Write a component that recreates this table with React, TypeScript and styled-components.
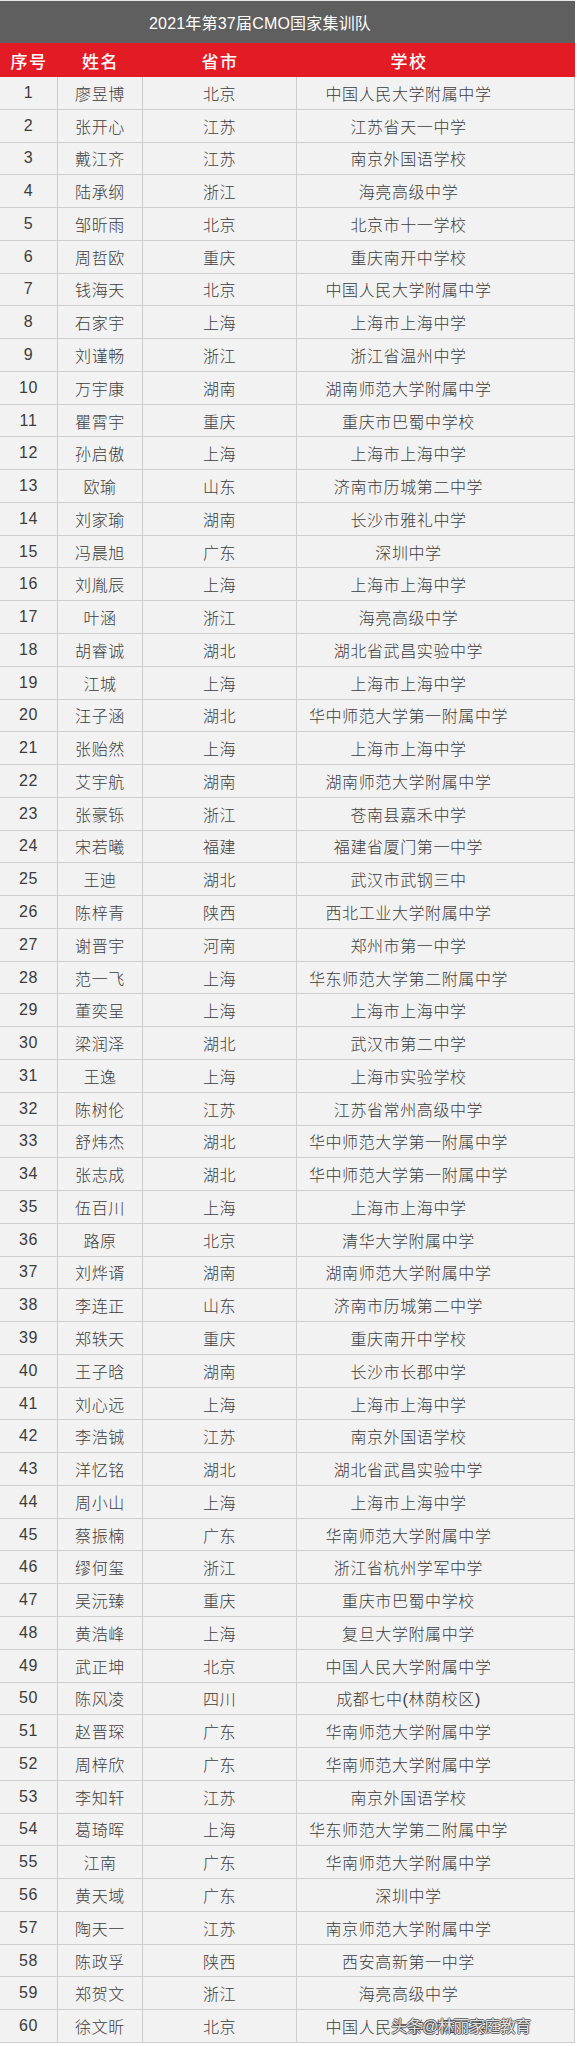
import React from 'react';
import styled, { createGlobalStyle } from 'styled-components';

const GlobalStyle = createGlobalStyle`
  html, body {
    margin: 0;
    padding: 0;
    background: #ffffff;
  }
  * {
    box-sizing: border-box;
  }
`;

const FONT = `"Liberation Sans", "Noto Sans CJK SC", sans-serif`;
const COLS = '58px 85px 154px 1fr';
const LINE = '#cdcdcd';

type Member = [string, string, string];

const members: Member[] = [
  ['廖昱博', '北京', '中国人民大学附属中学'],
  ['张开心', '江苏', '江苏省天一中学'],
  ['戴江齐', '江苏', '南京外国语学校'],
  ['陆承纲', '浙江', '海亮高级中学'],
  ['邹昕雨', '北京', '北京市十一学校'],
  ['周哲欧', '重庆', '重庆南开中学校'],
  ['钱海天', '北京', '中国人民大学附属中学'],
  ['石家宇', '上海', '上海市上海中学'],
  ['刘谨畅', '浙江', '浙江省温州中学'],
  ['万宇康', '湖南', '湖南师范大学附属中学'],
  ['瞿霄宇', '重庆', '重庆市巴蜀中学校'],
  ['孙启傲', '上海', '上海市上海中学'],
  ['欧瑜', '山东', '济南市历城第二中学'],
  ['刘家瑜', '湖南', '长沙市雅礼中学'],
  ['冯晨旭', '广东', '深圳中学'],
  ['刘胤辰', '上海', '上海市上海中学'],
  ['叶涵', '浙江', '海亮高级中学'],
  ['胡睿诚', '湖北', '湖北省武昌实验中学'],
  ['江城', '上海', '上海市上海中学'],
  ['汪子涵', '湖北', '华中师范大学第一附属中学'],
  ['张贻然', '上海', '上海市上海中学'],
  ['艾宇航', '湖南', '湖南师范大学附属中学'],
  ['张豪铄', '浙江', '苍南县嘉禾中学'],
  ['宋若曦', '福建', '福建省厦门第一中学'],
  ['王迪', '湖北', '武汉市武钢三中'],
  ['陈梓青', '陕西', '西北工业大学附属中学'],
  ['谢晋宇', '河南', '郑州市第一中学'],
  ['范一飞', '上海', '华东师范大学第二附属中学'],
  ['董奕呈', '上海', '上海市上海中学'],
  ['梁润泽', '湖北', '武汉市第二中学'],
  ['王逸', '上海', '上海市实验学校'],
  ['陈树伦', '江苏', '江苏省常州高级中学'],
  ['舒炜杰', '湖北', '华中师范大学第一附属中学'],
  ['张志成', '湖北', '华中师范大学第一附属中学'],
  ['伍百川', '上海', '上海市上海中学'],
  ['路原', '北京', '清华大学附属中学'],
  ['刘烨谞', '湖南', '湖南师范大学附属中学'],
  ['李连正', '山东', '济南市历城第二中学'],
  ['郑轶天', '重庆', '重庆南开中学校'],
  ['王子晗', '湖南', '长沙市长郡中学'],
  ['刘心远', '上海', '上海市上海中学'],
  ['李浩铖', '江苏', '南京外国语学校'],
  ['洋忆铭', '湖北', '湖北省武昌实验中学'],
  ['周小山', '上海', '上海市上海中学'],
  ['蔡振楠', '广东', '华南师范大学附属中学'],
  ['缪何玺', '浙江', '浙江省杭州学军中学'],
  ['吴沅臻', '重庆', '重庆市巴蜀中学校'],
  ['黄浩峰', '上海', '复旦大学附属中学'],
  ['武正坤', '北京', '中国人民大学附属中学'],
  ['陈风凌', '四川', '成都七中(林荫校区)'],
  ['赵晋琛', '广东', '华南师范大学附属中学'],
  ['周梓欣', '广东', '华南师范大学附属中学'],
  ['李知轩', '江苏', '南京外国语学校'],
  ['葛琦晖', '上海', '华东师范大学第二附属中学'],
  ['江南', '广东', '华南师范大学附属中学'],
  ['黄天域', '广东', '深圳中学'],
  ['陶天一', '江苏', '南京师范大学附属中学'],
  ['陈政孚', '陕西', '西安高新第一中学'],
  ['郑贺文', '浙江', '海亮高级中学'],
  ['徐文昕', '北京', '中国人民大学附属中学'],
];

const Page = styled.div`
  width: 577px;
  padding-right: 2px;
  background: #ffffff;
  font-family: ${FONT};
`;

const Table = styled.div`
  position: relative;
  width: 575px;
  border-top: 1px solid #e8e8e8;
`;

const TitleBar = styled.div`
  height: 42px;
  display: flex;
  align-items: center;
  justify-content: center;
  padding-right: 55px;
  background: #5f5f5f;
  color: #ffffff;
  font-size: 16px;
  letter-spacing: 0.2px;
`;

const HeaderRow = styled.div`
  display: grid;
  grid-template-columns: ${COLS};
  height: 34px;
  background: #e31b24;
`;

const HeaderCell = styled.div<{ $shift?: number }>`
  display: flex;
  align-items: center;
  justify-content: center;
  padding-right: ${({ $shift }) => $shift ?? 0}px;
  color: #ffffff;
  font-size: 17px;
  font-weight: 500;
  letter-spacing: 1.5px;
`;

const Row = styled.div`
  display: grid;
  grid-template-columns: ${COLS};
  height: 32.78px;
  background: #f2f2f2;
  border-bottom: 1px solid ${LINE};
  border-right: 1px solid ${LINE};
`;

const Cell = styled.div<{ $shift?: number; $last?: boolean }>`
  display: flex;
  align-items: center;
  justify-content: center;
  padding-right: ${({ $shift }) => $shift ?? 0}px;
  border-right: ${({ $last }) => ($last ? 'none' : `1px solid ${LINE}`)};
  color: #3c3c3c;
  font-size: 16px;
  font-weight: 300;
  letter-spacing: 0.6px;
  white-space: nowrap;
`;

const Watermark = styled.div`
  position: absolute;
  left: 391px;
  bottom: 6px;
  font-size: 16px;
  color: rgba(255, 255, 255, 0.85);
  letter-spacing: -0.5px;
  text-shadow:
    -1px 0 0 rgba(70, 70, 70, 0.75),
    1px 0 0 rgba(70, 70, 70, 0.75),
    0 -1px 0 rgba(70, 70, 70, 0.75),
    0 1px 0 rgba(70, 70, 70, 0.75);
  pointer-events: none;
`;

export default function App() {
  return (
    <Page>
      <GlobalStyle />
      <Table>
        <TitleBar>2021年第37届CMO国家集训队</TitleBar>
        <HeaderRow>
          <HeaderCell>序号</HeaderCell>
          <HeaderCell>姓名</HeaderCell>
          <HeaderCell>省市</HeaderCell>
          <HeaderCell $shift={54}>学校</HeaderCell>
        </HeaderRow>
        {members.map(([name, province, school], i) => (
          <Row key={i}>
            <Cell>{i + 1}</Cell>
            <Cell>{name}</Cell>
            <Cell>{province}</Cell>
            <Cell $shift={54} $last>
              {school}
            </Cell>
          </Row>
        ))}
        <Watermark>头条@林丽家庭教育</Watermark>
      </Table>
    </Page>
  );
}
